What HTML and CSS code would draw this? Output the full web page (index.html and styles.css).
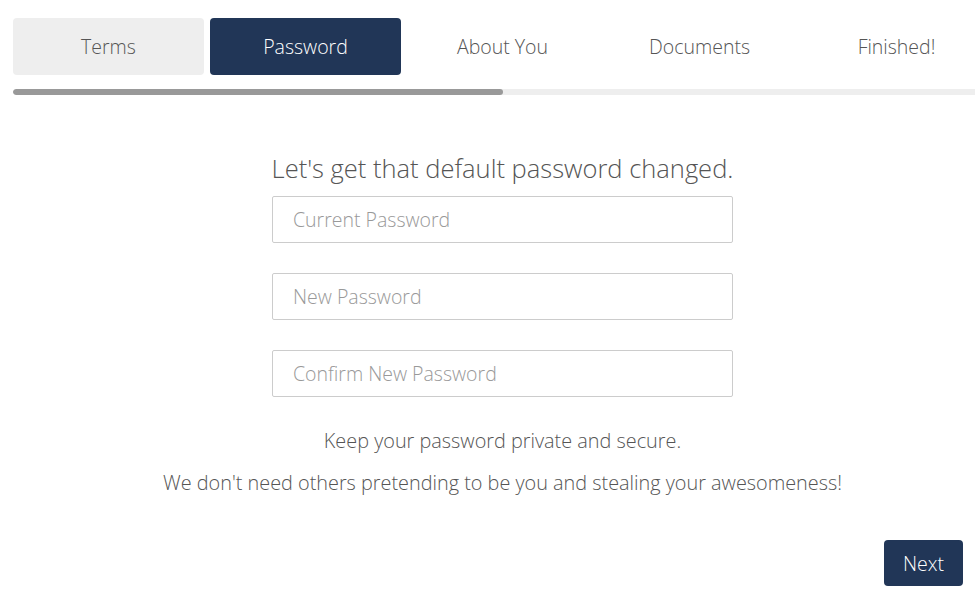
FILE: index.html
```html
<!DOCTYPE html>
<html lang="en">
<head>
  <meta charset="UTF-8">
  <meta name="viewport" content="width=device-width, initial-scale=1.0">
  <title>Change Password</title>
  <link rel="stylesheet" href="styles.css">
</head>
<body>
  <div class="wizard">
    <div class="steps">
      <div class="step done">Terms</div>
      <div class="step active">Password</div>
      <div class="step">About You</div>
      <div class="step">Documents</div>
      <div class="step">Finished!</div>
    </div>
    <div class="progress">
      <div class="progress-fill" style="width: 50%"></div>
    </div>

    <div class="panel">
      <h2>Let's get that default password changed.</h2>
      <form class="fields">
        <input type="password" placeholder="Current Password">
        <input type="password" placeholder="New Password">
        <input type="password" placeholder="Confirm New Password">
      </form>
      <p class="note">Keep your password private and secure.</p>
      <p class="note">We don't need others pretending to be you and stealing your awesomeness!</p>
    </div>

    <div class="actions">
      <button class="next">Next</button>
    </div>
  </div>
</body>
</html>
```

FILE: styles.css
```css
html {
  overflow: hidden;
}
body {
  font-family: "Open Sans", "Noto Sans", sans-serif;
  font-weight: 300;
  color: #555;
  margin: 0;
  background: #fff;
}
.wizard {
  width: 979px;
  padding: 18px 0 0 13px;
}
.steps {
  display: flex;
  gap: 6px;
}
.step {
  width: 191px;
  height: 57px;
  display: flex;
  align-items: center;
  justify-content: center;
  font-size: 19.5px;
  color: #555;
  border-radius: 4px;
  flex-shrink: 0;
}
.step.done {
  background-color: #eeeeee;
}
.step.active {
  background-color: #213657;
  color: #fff;
}
.progress {
  margin-top: 14px;
  height: 6px;
  background-color: #eeeeee;
  border-radius: 3px;
  overflow: hidden;
}
.progress-fill {
  height: 100%;
  background-color: #999;
  border-radius: 3px;
}
.panel {
  display: flex;
  flex-direction: column;
  align-items: center;
  padding-top: 56px;
}
h2 {
  font-size: 25.5px;
  font-weight: 300;
  margin: 0 0 11px;
  color: #555;
  line-height: 34px;
}
.fields {
  display: flex;
  flex-direction: column;
  gap: 30px;
  margin-bottom: 30px;
}
.fields input {
  width: 461px;
  height: 47px;
  box-sizing: border-box;
  border: 1px solid #ccc;
  border-radius: 2px;
  padding: 0 20px;
  font-family: inherit;
  font-weight: 300;
  font-size: 19.5px;
  color: #555;
}
.fields input::placeholder {
  color: #999;
}
.note {
  font-size: 19.85px;
  margin: 0 0 15px;
  line-height: 27px;
  color: #555;
}
.actions {
  display: flex;
  justify-content: flex-end;
  padding-right: 29px;
  margin-top: 29px;
}
.next {
  width: 79px;
  height: 46px;
  background-color: #213657;
  color: #fff;
  border: none;
  border-radius: 4px;
  font-family: inherit;
  font-weight: 300;
  font-size: 19.5px;
  cursor: pointer;
}
```
